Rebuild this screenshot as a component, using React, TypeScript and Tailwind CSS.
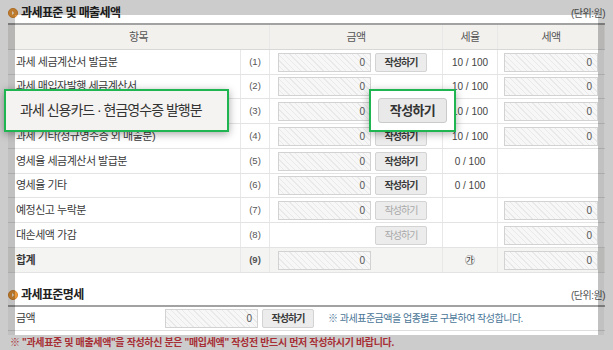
import React from "react";

type Row = {
  label: string;
  no: string;
  amount: boolean;
  button: "on" | "off" | null;
  rate: string | null;
  tax: boolean;
  h: string;
  total?: boolean;
};

const rows: Row[] = [
  { label: "과세 세금계산서 발급분", no: "(1)", amount: true, button: "on", rate: "10 / 100", tax: true, h: "h-[25px]" },
  { label: "과세 매입자발행 세금계산서", no: "(2)", amount: true, button: null, rate: "10 / 100", tax: true, h: "h-[24px]" },
  { label: "과세 신용카드 · 현금영수증 발행분", no: "(3)", amount: true, button: "on", rate: "10 / 100", tax: true, h: "h-[25px]" },
  { label: "과세 기타(정규영수증 외 매출분)", no: "(4)", amount: true, button: "on", rate: "10 / 100", tax: true, h: "h-[25px]" },
  { label: "영세율 세금계산서 발급분", no: "(5)", amount: true, button: "on", rate: "0 / 100", tax: false, h: "h-[25px]" },
  { label: "영세율 기타", no: "(6)", amount: true, button: "on", rate: "0 / 100", tax: false, h: "h-[24px]" },
  { label: "예정신고 누락분", no: "(7)", amount: true, button: "off", rate: null, tax: true, h: "h-[25px]" },
  { label: "대손세액 가감", no: "(8)", amount: false, button: "off", rate: null, tax: true, h: "h-[25px]" },
  { label: "합계", no: "(9)", amount: true, button: null, rate: "㉮", tax: true, h: "h-[25px]", total: true },
];

const grid = "grid grid-cols-[233px_29px_173px_55px_106px]";
const cell = "flex items-center border-r border-[#e8e8e8]";

function Bullet() {
  return (
    <svg width="10" height="10" viewBox="0 0 10 10" className="shrink-0">
      <circle cx="5" cy="5" r="4.6" fill="#ec9a3a" stroke="#d07a1c" strokeWidth="0.8" />
      <path d="M4 3 L6.3 5 L4 7 Z" fill="#fff4e0" />
    </svg>
  );
}

function Field({ w }: { w: string }) {
  return (
    <div
      className={`${w} flex h-[19px] items-center justify-end border border-[#d2d2d2] bg-[repeating-linear-gradient(45deg,#f7f7f7_0px,#f7f7f7_3px,#e9e9e9_3px,#e9e9e9_4px)] pr-[5px] text-[10px] font-normal text-[#555]`}
    >
      0
    </div>
  );
}

function WriteButton({ off }: { off?: boolean }) {
  return (
    <div
      className={`flex h-[19px] w-[52px] items-center justify-center rounded-[2px] border border-[#d3d3d3] bg-[#ececec] text-[10px] tracking-[-0.9px] ${
        off ? "text-[#a8a8a8]" : "font-bold text-[#3a3a3a]"
      }`}
    >
      작성하기
    </div>
  );
}

function SectionHead({ title, className }: { title: string; className: string }) {
  return (
    <div className={`flex items-center justify-between ${className}`}>
      <div className="flex items-center gap-[3px]">
        <Bullet />
        <span className="text-[12px] font-bold tracking-[-0.6px] text-[#222]">{title}</span>
      </div>
      <span className="text-[10px] tracking-[-0.5px] text-[#555]">(단위:원)</span>
    </div>
  );
}

export default function App() {
  return (
    <div className="relative h-[350px] w-[613px] overflow-hidden bg-white px-[8px] font-['Liberation_Sans','Noto_Sans_CJK_KR',sans-serif] text-[#333]">
      <SectionHead title="과세표준 및 매출세액" className="h-[23px] pt-[3px]" />

      <div className="border-t-2 border-[#a2a2a2]">
        <div className={`${grid} h-[25px] border-b border-[#d8d8d8] bg-[#f3f1ee] text-[11px] tracking-[-0.5px] text-[#555]`}>
          <div className={`${cell} col-span-2 justify-center`}>항목</div>
          <div className={`${cell} justify-center`}>금액</div>
          <div className={`${cell} justify-center`}>세율</div>
          <div className="flex items-center justify-center">세액</div>
        </div>
        {rows.map((r) => (
          <div
            key={r.no}
            className={`${grid} ${r.h} border-b border-[#e3e3e3] ${r.total ? "bg-[#f4f4f3]" : ""}`}
          >
            <div className={`${cell} pl-[8px] text-[11px] tracking-[-0.5px] text-[#3a3a3a] ${r.total ? "font-bold" : ""}`}>
              {r.label}
            </div>
            <div className={`${cell} justify-center text-[9.5px] text-[#555] ${r.total ? "font-bold" : ""}`}>{r.no}</div>
            <div className={`${cell} gap-[4px] pl-[8px]`}>
              {r.amount ? <Field w="w-[93px]" /> : <div className="w-[93px]" />}
              {r.button && <WriteButton off={r.button === "off"} />}
            </div>
            <div className={`${cell} justify-center text-[10px] text-[#444]`}>{r.rate}</div>
            <div className="flex items-center pl-[6px]">{r.tax && <Field w="w-[94px]" />}</div>
          </div>
        ))}
      </div>

      <SectionHead title="과세표준명세" className="h-[32px] pt-[12px]" />

      <div className="border-t-2 border-[#a2a2a2]">
        <div className="flex h-[24px] items-center border-b border-[#dedede]">
          <div className="w-[157px] pl-[8px] text-[11px] tracking-[-0.5px] text-[#3a3a3a]">금액</div>
          <Field w="w-[93px]" />
          <div className="ml-[4px]">
            <WriteButton />
          </div>
          <span className="ml-[14px] text-[10px] tracking-[-0.5px] text-[#4a7697]">
            ※ 과세표준금액을 업종별로 구분하여 작성합니다.
          </span>
        </div>
      </div>

      <p className="mt-[4px] pl-[2px] text-[10px] font-bold tracking-[-0.35px] text-[#d23a44]">
        ※ "과세표준 및 매출세액"을 작성하신 분은 "매입세액" 작성전 반드시 먼저 작성하시기 바랍니다.
      </p>

      {/* dimmed overlay with a spotlight hole */}
      <div className="pointer-events-none absolute top-[15px] left-[15px] h-[320px] w-[583px] shadow-[0_0_0_1000px_rgba(0,0,0,0.2)]" />
      <div className="pointer-events-none absolute top-[23px] left-[8px] h-[312px] w-[7px] bg-black/5" />
      <div className="pointer-events-none absolute top-[23px] left-[598px] h-[312px] w-[6px] bg-black/5" />

      {/* zoomed callouts */}
      <div className="absolute top-[89px] left-[4px] flex h-[43px] w-[225px] items-center border-2 border-[#1fb551] bg-[#f5f3f1] pl-[14px] text-[14px] tracking-[-1px] text-[#333] shadow-[0_2px_8px_rgba(0,0,0,0.35)]">
        과세 신용카드 · 현금영수증 발행분
      </div>
      <div className="absolute top-[89px] left-[369px] flex h-[43px] w-[87px] items-center justify-center border-2 border-[#1fb551] bg-white shadow-[0_2px_8px_rgba(0,0,0,0.3)]">
        <div className="flex h-[25px] w-[69px] items-center justify-center rounded-[3px] border border-[#cacaca] bg-[#e9e9e9] text-[13px] font-bold tracking-[-0.6px] text-[#333]">
          작성하기
        </div>
      </div>
    </div>
  );
}
